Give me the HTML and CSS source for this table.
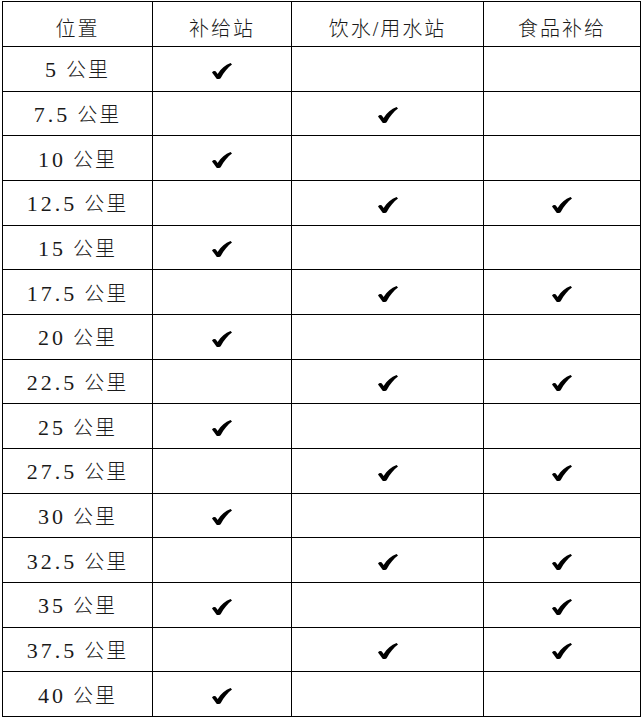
FILE: index.html
```html
<!DOCTYPE html>
<html lang="zh-CN">
<head>
<meta charset="utf-8">
<title>补给站</title>
<link rel="stylesheet" href="styles.css">
</head>
<body>
<table class="grid">
  <colgroup>
    <col class="c1"><col class="c2"><col class="c3"><col class="c4">
  </colgroup>
  <thead>
    <tr class="head"><th>位置</th><th>补给站</th><th>饮水/用水站</th><th>食品补给</th></tr>
  </thead>
  <tbody id="rows"></tbody>
</table>
<script>
  var data = [
    ["5",1,0,0],["7.5",0,1,0],["10",1,0,0],["12.5",0,1,1],
    ["15",1,0,0],["17.5",0,1,1],["20",1,0,0],["22.5",0,1,1],
    ["25",1,0,0],["27.5",0,1,1],["30",1,0,0],["32.5",0,1,1],
    ["35",1,0,1],["37.5",0,1,1],["40",1,0,0]
  ];
  var check = '<svg class="chk" viewBox="0 0 20 16" width="20" height="16"><path d="M0 9.4 C1.4 7.6 3.4 7.6 4.6 9.4 L5.6 11 C9 5.6 13.2 1.8 18.6 0 L20 1.6 C15.8 4.6 12 9.4 8.8 15 C8 16.2 5.4 16.4 4.4 15.4 C3 13.2 1.6 11.4 0 9.4 Z" fill="#000"/></svg>';
  var tb = document.getElementById('rows');
  data.forEach(function(r){
    var tr = document.createElement('tr');
    tr.className = 'row';
    var h = '<td class="pos"><span class="num">' + r[0] + '</span> 公里</td>';
    for (var i = 1; i < 4; i++) h += '<td>' + (r[i] ? check : '') + '</td>';
    tr.innerHTML = h;
    tb.appendChild(tr);
  });
</script>
</body>
</html>
```
FILE: styles.css
```css
html, body {
  margin: 0;
  padding: 0;
  background: #fff;
}
body {
  padding: 1px 0 0 2px;
}
.grid {
  border-collapse: collapse;
  table-layout: fixed;
  width: 638px;
  font-family: "Liberation Serif", "Noto Sans CJK SC", serif;
  font-size: 20px;
  font-weight: 300;
  color: #1a1a1a;
}
.c1 { width: 150px; }
.c2 { width: 139px; }
.c3 { width: 192px; }
.c4 { width: 157px; }
.grid th, .grid td {
  border: 1px solid #000;
  text-align: center;
  vertical-align: middle;
  padding: 0;
  letter-spacing: 2px;
}
.grid th {
  font-weight: 300;
  padding-top: 6px;
}
.head { height: 45px; }
.row { height: 44.67px; }
.pos { padding-top: 6px; }
.num {
  font-size: 22px;
  letter-spacing: 3px;
}
.chk {
  display: block;
  margin: 4px auto 0;
}
```
